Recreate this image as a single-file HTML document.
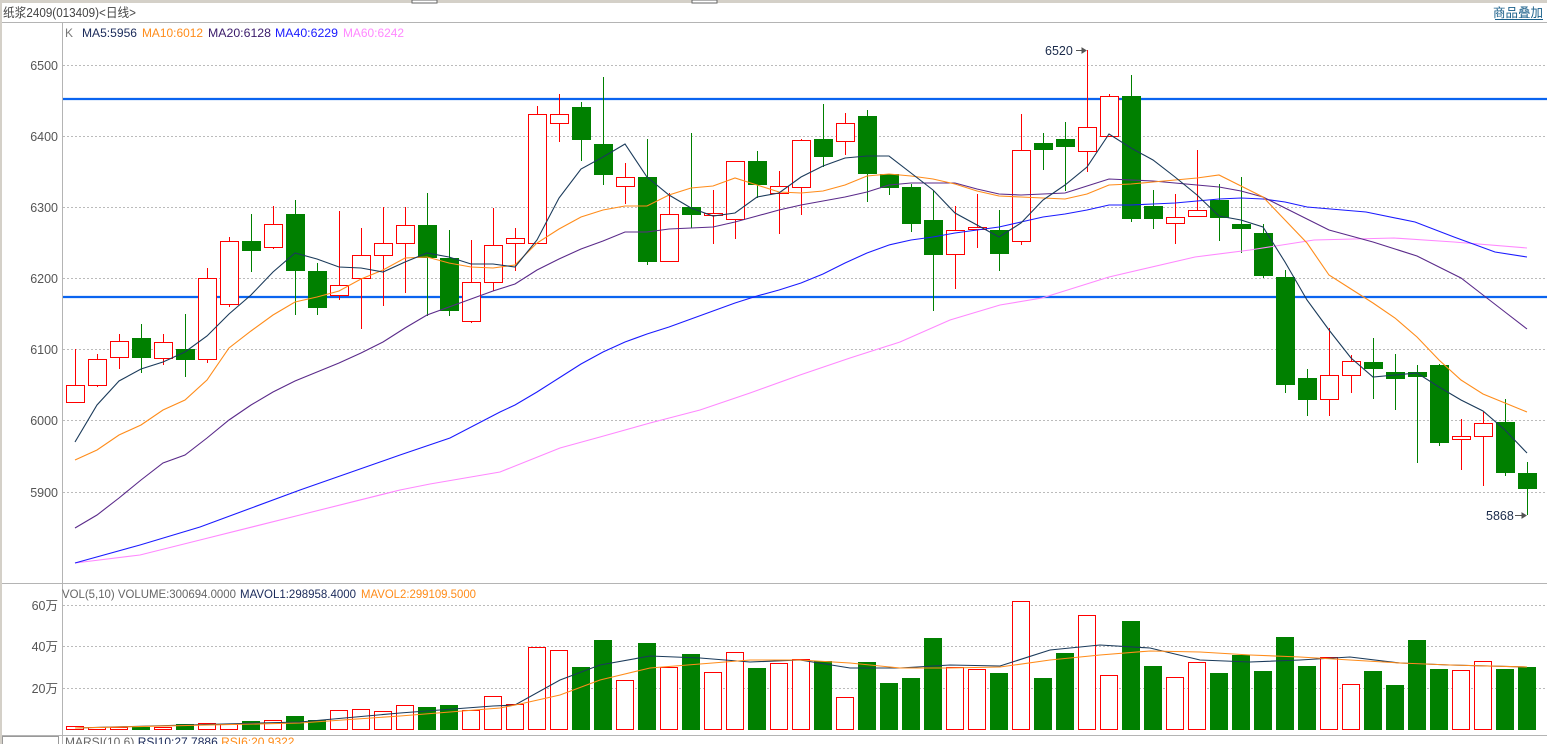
<!DOCTYPE html>
<html><head><meta charset="utf-8"><style>
html,body{margin:0;padding:0;background:#fff;}
body{width:1547px;height:744px;overflow:hidden;position:relative;font-family:"Liberation Sans","Noto Sans CJK SC",sans-serif;}
svg text{font-family:"Liberation Sans","Noto Sans CJK SC",sans-serif;}
</style></head><body>
<svg id="s" width="1547" height="744" viewBox="0 0 1547 744" xmlns="http://www.w3.org/2000/svg" shape-rendering="crispEdges">
<rect x="0" y="0" width="1547" height="744" fill="#fff"/>
<rect x="0" y="0" width="1547" height="3" fill="#d4d0c8"/>
<rect x="412" y="0" width="25" height="3" fill="#fff" stroke="#666" stroke-width="0.7"/>
<rect x="692" y="0" width="25" height="3" fill="#fff" stroke="#666" stroke-width="0.7"/>
<rect x="0" y="0" width="2" height="744" fill="#d4d0c8"/>
<text x="3" y="17" font-size="12.5" fill="#444" textLength="133" lengthAdjust="spacingAndGlyphs">纸浆2409(013409)&lt;日线&gt;</text>
<text x="1543" y="17" font-size="12.5" fill="#1a5f8a" text-anchor="end">商品叠加</text>
<line x1="1495" y1="19.5" x2="1543" y2="19.5" stroke="#1a5f8a"/>
<line x1="2" y1="22.5" x2="1547" y2="22.5" stroke="#b4b4b4"/>
<line x1="62.5" y1="22" x2="62.5" y2="744" stroke="#b4b4b4"/>
<line x1="2" y1="583.5" x2="1547" y2="583.5" stroke="#b4b4b4"/>
<line x1="2" y1="735.5" x2="1547" y2="735.5" stroke="#b4b4b4"/>
<rect x="2.5" y="736.5" width="56" height="10" fill="#fff" stroke="#999"/>
<g id="grid" stroke="#bbb" stroke-dasharray="2,2"></g>
<g font-size="12.5" fill="#555" text-anchor="end">
<text x="58" y="70">6500</text><text x="58" y="141">6400</text><text x="58" y="212">6300</text>
<text x="58" y="283">6200</text><text x="58" y="354">6100</text><text x="58" y="425">6000</text>
<text x="58" y="497">5900</text>
<text x="58" y="610">60万</text><text x="58" y="651">40万</text><text x="58" y="693">20万</text>
</g>
<g font-size="12">
<text x="65" y="37" fill="#777">K</text>
<text x="82" y="37" fill="#1a2a5a" textLength="55" lengthAdjust="spacingAndGlyphs">MA5:5956</text>
<text x="142" y="37" fill="#ff8c1a" textLength="61" lengthAdjust="spacingAndGlyphs">MA10:6012</text>
<text x="208" y="37" fill="#3a1a6a" textLength="63" lengthAdjust="spacingAndGlyphs">MA20:6128</text>
<text x="275" y="37" fill="#1a1aff" textLength="63" lengthAdjust="spacingAndGlyphs">MA40:6229</text>
<text x="343" y="37" fill="#ff88ff" textLength="61" lengthAdjust="spacingAndGlyphs">MA60:6242</text>
<text x="62" y="598" fill="#666" textLength="174" lengthAdjust="spacingAndGlyphs">VOL(5,10) VOLUME:300694.0000</text>
<text x="240" y="598" fill="#1a2a5a" textLength="116" lengthAdjust="spacingAndGlyphs">MAVOL1:298958.4000</text>
<text x="361" y="598" fill="#ff8c1a" textLength="115" lengthAdjust="spacingAndGlyphs">MAVOL2:299109.5000</text>
<text x="65" y="746" fill="#666">MARSI(10,6) <tspan fill="#1a2a5a">RSI10:27.7886</tspan> <tspan fill="#ff8c1a">RSI6:20.9322</tspan></text>
</g>
<g id="lines" fill="none" shape-rendering="auto"></g>
<g id="cand"></g>
<g id="vol"></g>
<g id="ma" fill="none" shape-rendering="auto"></g>
<g font-size="12.5" fill="#1a2a4a">
<text x="1045" y="55">6520</text>
<text x="1486" y="520">5868</text>
</g>
<g stroke="#555" fill="#555" shape-rendering="auto">
<line x1="1076" y1="50.5" x2="1085" y2="50.5"/><path d="M1082,48 L1086,50.5 L1082,53Z"/>
<line x1="1515" y1="515.5" x2="1525" y2="515.5"/><path d="M1522,513 L1526,515.5 L1522,518Z"/>
</g>
</svg>
<script>
var NS="http://www.w3.org/2000/svg";
function el(p,t,a){var e=document.createElementNS(NS,t);for(var k in a)e.setAttribute(k,a[k]);document.getElementById(p).appendChild(e);return e;}
[65,136,207,278,349,420,492,605,646,688].forEach(function(y){el("grid","line",{x1:63,x2:1547,y1:y+0.5,y2:y+0.5});});
el("lines","line",{x1:63,x2:1547,y1:99,y2:99,stroke:"#0a64f0","stroke-width":2.2});
el("lines","line",{x1:63,x2:1547,y1:297,y2:297,stroke:"#0a64f0","stroke-width":2.2});
var C=[["r",385,402,349,402],["r",359,385,354,387],["r",341,357,334,369],["g",338,358,324,373],["r",342,358,334,365],["g",349,360,314,377],["r",278,359,268,363],["r",241,304,237,307],["g",241,251,214,272],["r",224,247,206,249],["g",214,271,200,315],["g",271,308,263,315],["r",285,295,211,300],["r",255,278,228,329],["r",243,255,207,306],["r",225,243,207,293],["g",225,258,193,316],["g",258,311,230,316],["r",282,321,240,323],["r",245,282,208,291],["r",238,243,228,271],["r",114,243,106,243],["r",114,123,94,142],["g",107,140,102,161],["g",144,175,77,185],["r",177,186,163,204],["g",177,262,139,265],["r",214,261,193,261],["g",207,215,133,228],["r",213,215,190,244],["r",161,219,161,239],["g",161,185,151,198],["r",186,193,171,234],["r",140,187,139,215],["g",139,157,104,167],["r",123,141,113,155],["g",116,174,110,202],["g",174,188,174,195],["g",187,224,184,232],["g",220,255,190,311],["r",230,254,206,289],["r",227,229,194,248],["g",230,254,210,271],["r",150,241,114,245],["g",143,150,133,170],["g",139,147,122,191],["r",127,151,50,172],["r",96,136,94,136],["g",96,219,75,222],["g",206,219,190,229],["r",217,223,194,244],["r",210,216,150,216],["g",200,218,184,241],["g",224,229,177,253],["g",233,276,224,278],["g",277,385,270,393],["g",378,400,369,416],["r",375,399,328,416],["r",361,375,355,393],["g",362,369,338,399],["g",372,379,354,410],["g",372,377,365,463],["g",365,443,364,446],["r",436,439,419,470],["r",423,436,412,486],["g",422,473,399,476],["g",473,489,462,515]];
var V=[726,727,727,727,727,724,723,724,721,720,716,720,710,709,711,705,707,705,710,696,704,647,650,667,640,680,643,667,654,672,652,668,663,659,661,697,662,683,678,638,667,669,673,601,678,653,615,675,621,666,677,662,673,655,671,637,666,657,684,671,685,640,669,670,661,669,667];
C.forEach(function(c,i){var x=75+22*i,col=c[0]=="r"?"#ff0000":"#008000";
el("cand","line",{x1:x+0.5,x2:x+0.5,y1:c[3],y2:c[4],stroke:col});
if(c[0]=="r")el("cand","rect",{x:x-9+0.5,y:c[1]+0.5,width:18,height:Math.max(1,c[2]-c[1]),fill:"#fff",stroke:col});
else el("cand","rect",{x:x-9,y:c[1],width:19,height:Math.max(2,c[2]-c[1]),fill:col});
var t=V[i];
if(c[0]=="r"){el("vol","rect",{x:x-9,y:t,width:18,height:730-t,fill:"#ff0000"});el("vol","rect",{x:x-8,y:t+1,width:16,height:728-t,fill:"#fff"});}
else el("vol","rect",{x:x-9,y:t,width:18,height:730-t,fill:col});
});
function pl(pts,col){el("ma","polyline",{points:pts,stroke:col,"stroke-width":1.1});}
pl("75,563 140,555 200,540 300,515 400,490 430,484 500,472 560,448 600,437 650,423 700,410 750,393 800,375 850,358 900,342 950,320 1000,305 1042,298 1109,277 1195,257 1250,250 1314,240 1394,238 1454,242 1527,248","#ff88ff");
pl("75,563 140,545 200,527 300,490 400,455 450,438 500,412 515,405 537,392 559,378 581,364 603,352 625,342 647,334 669,327 691,319 713,311 735,303 757,296 779,290 801,283 823,274 845,263 867,253 889,245 911,240 933,237 955,233 977,230 999,227 1021,222 1043,217 1065,214 1087,210 1109,205 1131,205 1153,204 1175,203 1197,201 1219,199 1241,198 1263,199 1285,202 1307,207 1366,212 1415,222 1454,237 1495,252 1527,257","#1a1aff");
pl("75,528 97,515 119,498 141,480 163,463 185,455 207,438 229,420 251,405 273,392 295,381 317,372 339,363 361,353 383,342 405,328 427,315 449,307 471,299 493,291 515,284 537,270 559,259 581,249 603,241 625,232 647,232 669,229 691,228 713,227 735,222 757,216 779,210 801,205 823,201 845,197 867,192 889,185 911,183 933,183 955,183 977,189 999,194 1021,195 1043,194 1065,193 1087,186 1109,179 1131,180 1153,181 1175,183 1197,185 1219,187 1241,191 1263,197 1285,208 1307,219 1329,230 1351,236 1373,242 1395,249 1417,256 1439,267 1461,278 1483,295 1505,312 1527,329","#5a2a8a");
pl("75,460 97,450 119,435 141,425 163,410 185,400 207,380 229,348 251,331 273,315 295,302 317,297 339,291 361,279 383,270 405,258 427,257 449,263 471,267 493,268 515,265 537,243 559,229 581,217 603,210 625,206 647,206 669,195 691,188 713,186 735,178 757,185 779,192 801,193 823,191 845,185 867,176 889,174 911,176 933,179 955,184 977,191 999,196 1021,197 1043,198 1065,199 1087,194 1109,185 1131,184 1153,182 1175,180 1197,178 1219,175 1241,186 1263,197 1285,220 1307,243 1329,275 1351,289 1373,303 1395,318 1417,337 1439,360 1461,380 1483,394 1505,403 1527,412","#ff8c1a");
pl("75,442 97,405 119,381 141,369 163,362 185,352 207,336 229,314 251,295 273,272 295,253 317,259 339,267 361,268 383,272 405,262 427,253 449,257 471,264 493,264 515,267 537,240 559,198 581,169 603,157 625,144 647,177 669,195 691,208 713,216 735,213 757,197 779,193 801,177 823,166 845,158 867,156 889,156 911,173 933,190 955,213 977,225 999,237 1021,223 1043,200 1065,185 1087,167 1109,134 1131,148 1153,160 1175,177 1197,195 1219,216 1241,220 1263,227 1285,262 1307,300 1329,330 1351,358 1373,377 1395,375 1417,373 1439,387 1461,400 1483,411 1505,430 1527,453","#1a3a5a");
pl("75,728 300,722 400,713 493,706 515,705 560,680 600,665 650,656 700,658 750,662 800,660 850,668 900,668 950,665 1000,666 1050,650 1100,645 1150,648 1200,660 1250,662 1300,660 1350,657 1400,663 1450,665 1527,667","#1a3a5a");
pl("75,728 300,723 400,716 500,708 520,704 560,695 600,680 650,668 700,664 750,660 800,660 850,663 900,668 950,668 1000,667 1050,660 1100,655 1150,651 1200,652 1250,655 1300,657 1350,660 1400,663 1450,665 1527,667","#ff8c1a");
</script>
</body></html>
